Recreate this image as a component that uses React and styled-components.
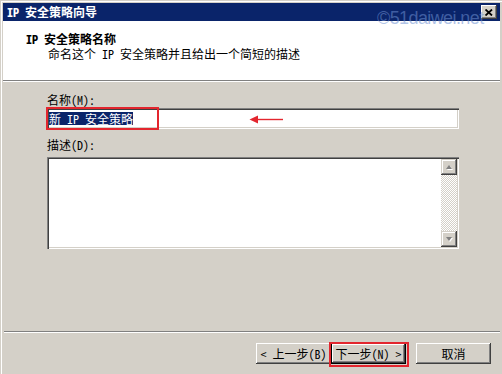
import React from "react";
import styled, { createGlobalStyle, css } from "styled-components";

const FONT = `"Noto Sans Mono CJK SC", "Noto Sans CJK SC", "Liberation Sans", sans-serif`;

const Global = createGlobalStyle`
  html, body { margin: 0; padding: 0; background: #d4d0c8; }
  body { font-family: ${FONT}; font-size: 12px; color: #000; }
`;

const Screen = styled.div`
  position: relative;
  width: 502px;
  height: 374px;
  overflow: hidden;
  background: #d4d0c8;
`;

const Window = styled.div`
  display: flex;
  flex-direction: column;
  height: 100%;
  box-sizing: border-box;
  padding: 3px 2px 0 3px;
  background: #d4d0c8;
  box-shadow: inset 1px 1px 0 #d4d0c8, inset 2px 2px 0 #fff;
`;

const TitleBar = styled.div`
  flex: none;
  height: 18px;
  display: flex;
  align-items: center;
  justify-content: space-between;
  padding: 0 3px 0 4px;
  background: #0a246a;
  color: #fff;
  font-weight: bold;
  line-height: 14px;
`;

const CloseButton = styled.div`
  width: 16px;
  height: 14px;
  box-sizing: border-box;
  display: flex;
  align-items: center;
  justify-content: center;
  background: #d4d0c8;
  box-shadow: inset -1px -1px 0 #404040, inset 1px 1px 0 #fff,
    inset -2px -2px 0 #808080, inset 2px 2px 0 #d4d0c8;
`;

const Header = styled.div`
  flex: none;
  height: 60px;
  box-sizing: border-box;
  background: #fff;
  border-bottom: 1px solid #808080;
  padding: 10px 0 0 23px;
`;

const HeaderTitle = styled.div`
  font-weight: bold;
  line-height: 16px;
`;

const HeaderSub = styled.div`
  line-height: 14px;
  margin-left: 22px;
`;

const Body = styled.div`
  flex: 1;
  display: flex;
  flex-direction: column;
  align-items: flex-start;
  border-top: 1px solid #fff;
  padding: 11px 0 0 44px;
`;

const Label = styled.div`
  line-height: 14px;
  margin-top: ${(p) => p.$top || 0}px;
`;

const sunken = css`
  background: #fff;
  box-shadow: inset 1px 1px 0 #808080, inset 2px 2px 0 #404040,
    inset -1px -1px 0 #fff, inset -2px -2px 0 #d4d0c8;
`;

const TextField = styled.div`
  ${sunken}
  width: 412px;
  height: 21px;
  box-sizing: border-box;
  margin-top: 1px;
  padding: 2px;
  display: flex;
  align-items: center;
`;

const Selection = styled.span`
  background: #0a246a;
  color: #fff;
  line-height: 13px;
  white-space: pre;
`;

const TextArea = styled.div`
  ${sunken}
  width: 412px;
  height: 92px;
  box-sizing: border-box;
  margin-top: 5px;
  padding: 2px;
  display: flex;
  justify-content: flex-end;
`;

const ScrollBar = styled.div`
  width: 16px;
  display: flex;
  flex-direction: column;
  justify-content: space-between;
  background: repeating-conic-gradient(#d4d0c8 0 25%, #fff 0 50%) 0 0 / 2px 2px;
`;

const ScrollButton = styled.div`
  width: 16px;
  height: 16px;
  display: flex;
  align-items: center;
  justify-content: center;
  background: #d4d0c8;
  box-shadow: inset -1px -1px 0 #404040, inset 1px 1px 0 #d4d0c8,
    inset -2px -2px 0 #808080, inset 2px 2px 0 #fff;
`;

const Footer = styled.div`
  flex: none;
  height: 43px;
  box-sizing: border-box;
  margin-left: 1px;
  border-top: 1px solid #808080;
  box-shadow: inset 0 1px 0 #fff;
  display: flex;
  justify-content: flex-end;
  align-items: flex-start;
  padding: 11px 9px 0 0;
`;

const Button = styled.div`
  width: 75px;
  height: 21px;
  box-sizing: border-box;
  display: flex;
  align-items: center;
  justify-content: center;
  white-space: pre;
  line-height: 14px;
  margin-left: ${(p) => p.$gap || 0}px;
  background: #d4d0c8;
  box-shadow: inset -1px -1px 0 #404040, inset 1px 1px 0 #fff,
    inset -2px -2px 0 #808080, inset 2px 2px 0 #d4d0c8;
  ${(p) =>
    p.$default &&
    css`
      box-shadow: inset 0 0 0 1px #000, inset -2px -2px 0 #404040,
        inset 2px 2px 0 #fff, inset -3px -3px 0 #808080;
    `}
`;

const Watermark = styled.div`
  position: absolute;
  left: 377px;
  top: 8px;
  font-family: "Liberation Sans", Arial, sans-serif;
  font-size: 18px;
  letter-spacing: -0.6px;
  color: rgba(110, 145, 210, 0.55);
  pointer-events: none;
`;

const RedBox = styled.div`
  position: absolute;
  box-sizing: border-box;
  border: 2px solid #e3262e;
`;

const Arrow = styled.svg`
  position: absolute;
  left: 249px;
  top: 114px;
`;

const Tri = ({ up }) => (
  <svg width="9" height="6" viewBox="0 0 9 6">
    {up ? (
      <>
        <path d="M1 5 L4 1 L7 5 Z" fill="#fff" transform="translate(1,1)" />
        <path d="M1 5 L4 1 L7 5 Z" fill="#808080" />
      </>
    ) : (
      <>
        <path d="M1 1 L4 5 L7 1 Z" fill="#fff" transform="translate(1,1)" />
        <path d="M1 1 L4 5 L7 1 Z" fill="#808080" />
      </>
    )}
  </svg>
);

export default function App() {
  return (
    <>
      <Global />
      <Screen>
        <Window>
          <TitleBar>
            <span>IP 安全策略向导</span>
            <CloseButton>
              <svg width="8" height="7" viewBox="0 0 8 7">
                <path d="M0.5 0.5 L7 6.5 M7 0.5 L0.5 6.5" stroke="#000" strokeWidth="1.8" />
              </svg>
            </CloseButton>
          </TitleBar>
          <Header>
            <HeaderTitle>IP 安全策略名称</HeaderTitle>
            <HeaderSub>命名这个 IP 安全策略并且给出一个简短的描述</HeaderSub>
          </Header>
          <Body>
            <Label>名称(M):</Label>
            <TextField>
              <Selection>新 IP 安全策略</Selection>
            </TextField>
            <Label $top={9}>描述(D):</Label>
            <TextArea>
              <ScrollBar>
                <ScrollButton>
                  <Tri up />
                </ScrollButton>
                <ScrollButton>
                  <Tri />
                </ScrollButton>
              </ScrollBar>
            </TextArea>
          </Body>
          <Footer>
            <Button>{"< 上一步(B)"}</Button>
            <Button $default>{"下一步(N) >"}</Button>
            <Button $gap={10}>取消</Button>
          </Footer>
        </Window>
        <Watermark>©51daiwei.net</Watermark>
        <RedBox style={{ left: 46, top: 107, width: 113, height: 23 }} />
        <RedBox style={{ left: 329, top: 342, width: 80, height: 25 }} />
        <Arrow width="36" height="11" viewBox="0 0 36 11">
          <path d="M0.5 5.5 L9 1.5 L9 9.5 Z" fill="#e3262e" />
          <path d="M8 5.5 L34 5.5" stroke="#e3262e" strokeWidth="1.4" />
        </Arrow>
      </Screen>
    </>
  );
}
